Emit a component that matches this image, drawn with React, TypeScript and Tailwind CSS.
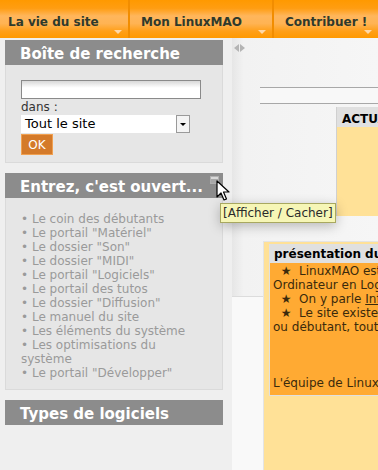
import React from "react";

const font = "font-['DejaVu_Sans','Liberation_Sans',sans-serif]";

function NavTab({ label, width, pad, last }: { label: string; width: string; pad: string; last?: boolean }) {
  return (
    <div className={`relative h-full ${width} ${last ? "" : "border-r-2 border-[#f28d00]"}`}>
      <span className={`absolute ${pad} top-[13px] text-[12px] font-bold text-[#2f3a2c]`}>{label}</span>
      <span className="absolute right-[6px] bottom-[4px] h-0 w-0 border-x-[4px] border-t-[4px] border-x-transparent border-t-[#ffd8a8]" />
    </div>
  );
}

function BoxHeader({ title, toggle }: { title: string; toggle?: boolean }) {
  return (
    <div className="relative h-[25px] bg-[#8c8c8c] pl-[15px] pt-[4px] text-[15px] font-bold leading-[20px] text-white">
      {title}
      {toggle && (
        <span className="absolute right-[4px] top-[3px] h-[8px] w-[9px] border border-[#b0b0b0] bg-[#a8a8a8]">
          <span className="block h-[2px] bg-[#d8d8d8]" />
        </span>
      )}
    </div>
  );
}

const links = [
  "Le coin des débutants",
  'Le portail "Matériel"',
  'Le dossier "Son"',
  'Le dossier "MIDI"',
  'Le portail "Logiciels"',
  "Le portail des tutos",
  'Le dossier "Diffusion"',
  "Le manuel du site",
  "Les éléments du système",
  "Les optimisations du système",
  'Le portail "Développer"',
];

export default function App() {
  return (
    <div className={`relative h-[470px] w-[378px] overflow-hidden bg-[#efefef] ${font}`}>
      {/* Top menu */}
      <nav className="flex h-[38px] bg-[linear-gradient(to_bottom,#ff9900_0%,#ff9d12_22%,#ffb65c_42%,#ffb353_62%,#ff9f18_82%,#ff9900_100%)]">
        <NavTab label="La vie du site" width="w-[130px]" pad="left-[8px]" />
        <NavTab label="Mon LinuxMAO" width="w-[144px]" pad="left-[11px]" />
        <NavTab label="Contribuer !" width="flex-1" pad="left-[11px]" last />
      </nav>

      <div className="flex h-[432px]">
        {/* Left column */}
        <aside className="w-[232px] shrink-0 pl-[5px] pt-[2px]">
          <div className="w-[218px]">
            <BoxHeader title="Boîte de recherche" />
            <div className="h-[98px] border-x border-b border-[#dadada] bg-[#e6e6e6] pl-[15px] pt-[15px] text-[12px] text-[#333]">
              <div className="h-[19px] w-[180px] border border-[#8a8a8a] bg-[linear-gradient(to_bottom,#d8d8d8,#ffffff_40%)]" />
              <div className="mt-[1px] leading-[14px]">dans :</div>
              <div className="mt-[1px] flex h-[18px] w-[169px] items-center justify-between bg-white pl-[4px] text-[13px] text-black">
                Tout le site
                <span className="flex h-[18px] w-[14px] items-center justify-center border border-[#9a9a9a] bg-[#f4f4f4]">
                  <span className="h-0 w-0 border-x-[3px] border-t-[3px] border-x-transparent border-t-black" />
                </span>
              </div>
              <div className="mt-[1px] flex h-[21px] w-[32px] items-center justify-center border border-[#f0a050] bg-[#d47a2a] text-[12px] text-white">
                OK
              </div>
            </div>
          </div>

          <div className="mt-[10px] w-[218px]">
            <BoxHeader title="Entrez, c'est ouvert..." toggle />
            <div className="h-[192px] border-x border-b border-[#dadada] bg-[#e6e6e6] pl-[15px] pr-[24px] pt-[14px] text-[12px] leading-[14px] text-[#9a9a9a]">
              {links.map((l) => (
                <div key={l}>• {l}</div>
              ))}
            </div>
          </div>

          <div className="mt-[10px] w-[218px]">
            <BoxHeader title="Types de logiciels" />
          </div>
        </aside>

        {/* Main area */}
        <main className="relative flex-1 overflow-hidden bg-[linear-gradient(to_right,#e6e6e6,#f2f2f2_8%,#f6f6f6)]">
          <div className="h-[253px]">
            <div className="ml-[2px] mt-[5px] flex h-[10px] items-center gap-[1px]">
              <span className="h-0 w-0 border-y-[4px] border-r-[5px] border-y-transparent border-r-[#b4b4b4]" />
              <span className="h-0 w-0 border-y-[4px] border-l-[5px] border-y-transparent border-l-[#b4b4b4]" />
            </div>
            <div className="ml-[28px] mt-[34px] h-[17px] border-y border-[#a8a8a8] bg-[#f8f8f8]" />
            <div className="ml-[104px] mt-[3px] w-[140px] border-l border-[#d0d0d0]">
              <div className="h-[20px] bg-[#e0e0e0] pl-[5px] pt-[3px] text-[12px] font-bold text-black">ACTUALITÉS</div>
              <div className="h-[89px] bg-[#ffe197]" />
            </div>
          </div>
          <div className="h-[179px] border-t border-[#dcdcdc] bg-[#f9f9f9] pl-[31px]">
            <div className="-mt-[56px] h-[240px] w-[200px] border border-[#e4e4e4] bg-[#ffe197] pl-[5px] pt-[2px]">
              <div className="border border-[#e0e0e0]">
                <div className="h-[18px] bg-[#e0e0e0] pl-[4px] text-[12px] font-bold leading-[18px] text-black">
                  présentation du site
                </div>
                <div className="h-[132px] whitespace-nowrap bg-[#ffaa33] pl-[3px] pt-[1px] text-[12px] leading-[14px] text-[#3b2a0c]">
                  <div>&nbsp;&nbsp;★&nbsp;&nbsp;LinuxMAO est un site</div>
                  <div>Ordinateur en Logiciels</div>
                  <div>&nbsp;&nbsp;★&nbsp;&nbsp;On y parle <span className="underline">Informatique</span></div>
                  <div>&nbsp;&nbsp;★&nbsp;&nbsp;Le site existe pour</div>
                  <div>ou débutant, tout le</div>
                  <div>&nbsp;</div>
                  <div>&nbsp;</div>
                  <div>&nbsp;</div>
                  <div>L'équipe de LinuxMAO</div>
                </div>
              </div>
            </div>
          </div>
        </main>
      </div>

      {/* Cursor */}
      <svg className="absolute left-[216px] top-[180px]" width="16" height="22" viewBox="0 0 16 22">
        <path d="M1 1 L1 17 L5 13 L8 20 L10.5 19 L7.5 12 L13 12 Z" fill="#fff" stroke="#000" strokeWidth="1.2" strokeLinejoin="round" />
      </svg>

      {/* Tooltip */}
      <div className="absolute left-[220px] top-[203px] h-[20px] border border-[#a8a860] bg-[#f6f6b6] px-[2px] text-[12px] leading-[18px] text-[#2a2a2a] shadow-[0_3px_12px_rgba(0,0,0,0.25)]">
        [Afficher / Cacher]
      </div>
    </div>
  );
}
